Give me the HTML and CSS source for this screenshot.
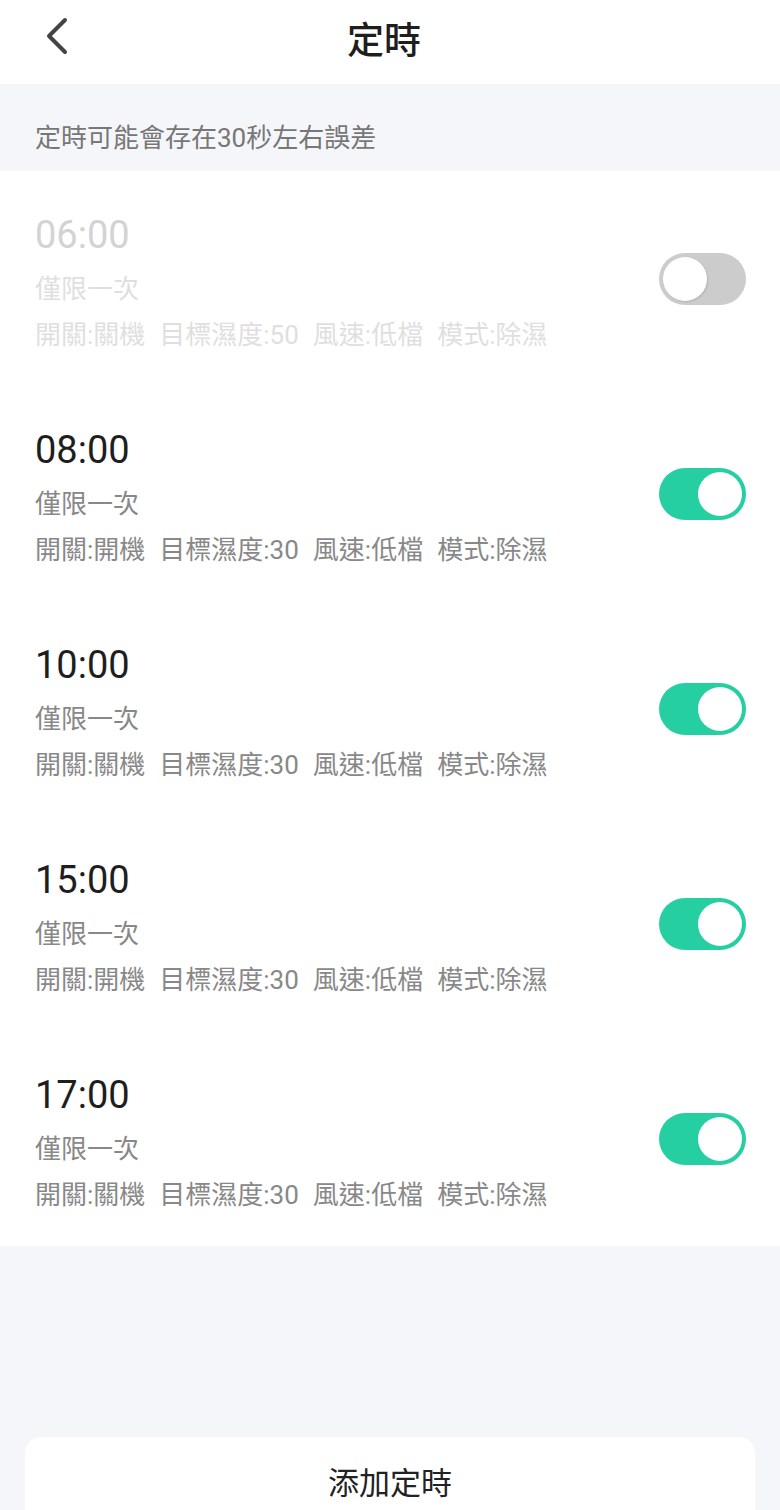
FILE: index.html
```html
<!DOCTYPE html>
<html lang="zh-Hant">
<head>
<meta charset="utf-8">
<title>定時</title>
<link rel="stylesheet" href="styles.css">
</head>
<body>
<div class="page">
  <header class="topbar">
    <span class="back">
      <svg width="30" height="40" viewBox="0 0 30 40"><polyline points="21,3 5,19 21,35" fill="none" stroke="#444" stroke-width="4" stroke-linecap="round" stroke-linejoin="round"/></svg>
    </span>
    <h1 class="title">定時</h1>
  </header>
  <div class="notice">定時可能會存在30秒左右誤差</div>
  <ul class="list">
    <li class="item disabled">
      <div class="info">
        <div class="time">06:00</div>
        <div class="repeat">僅限一次</div>
        <div class="detail"><span>開關:關機</span><span>目標濕度:50</span><span>風速:低檔</span><span>模式:除濕</span></div>
      </div>
      <span class="switch off"><span class="knob"></span></span>
    </li>
    <li class="item">
      <div class="info">
        <div class="time">08:00</div>
        <div class="repeat">僅限一次</div>
        <div class="detail"><span>開關:開機</span><span>目標濕度:30</span><span>風速:低檔</span><span>模式:除濕</span></div>
      </div>
      <span class="switch on"><span class="knob"></span></span>
    </li>
    <li class="item">
      <div class="info">
        <div class="time">10:00</div>
        <div class="repeat">僅限一次</div>
        <div class="detail"><span>開關:關機</span><span>目標濕度:30</span><span>風速:低檔</span><span>模式:除濕</span></div>
      </div>
      <span class="switch on"><span class="knob"></span></span>
    </li>
    <li class="item">
      <div class="info">
        <div class="time">15:00</div>
        <div class="repeat">僅限一次</div>
        <div class="detail"><span>開關:開機</span><span>目標濕度:30</span><span>風速:低檔</span><span>模式:除濕</span></div>
      </div>
      <span class="switch on"><span class="knob"></span></span>
    </li>
    <li class="item">
      <div class="info">
        <div class="time">17:00</div>
        <div class="repeat">僅限一次</div>
        <div class="detail"><span>開關:關機</span><span>目標濕度:30</span><span>風速:低檔</span><span>模式:除濕</span></div>
      </div>
      <span class="switch on"><span class="knob"></span></span>
    </li>
  </ul>
  <div class="actions">
    <button class="add-btn" type="button">添加定時</button>
  </div>
</div>
</body>
</html>
```

FILE: styles.css
```css
* { box-sizing: border-box; }
html, body {
  margin: 0;
  padding: 0;
  background: #f5f6fa;
}
body {
  font-family: Roboto, "Noto Sans CJK TC", sans-serif;
  color: #222;
}
.page {
  width: 780px;
  height: 1510px;
  overflow: hidden;
  display: flex;
  flex-direction: column;
}
.page > * { flex: none; }
.topbar {
  height: 84px;
  background: #fff;
  display: flex;
  align-items: center;
  justify-content: center;
  position: relative;
}
.back {
  position: absolute;
  left: 44px;
  top: 17px;
  width: 30px;
  height: 40px;
  display: flex;
}
.title {
  margin: -8px 12px 0 0;
  font-family: "Noto Sans CJK TC", sans-serif;
  font-size: 37px;
  font-weight: 500;
  line-height: 44px;
  color: #1e1e1e;
}
.notice {
  height: 87px;
  padding: 36px 0 0 35px;
  font-size: 26px;
  line-height: 36px;
  color: #777;
}
.list {
  list-style: none;
  margin: 0;
  padding: 0;
  background: #fff;
}
.item {
  height: 215px;
  padding: 42px 34px 0 35px;
  display: flex;
  align-items: flex-start;
  justify-content: space-between;
}
.info {
  display: flex;
  flex-direction: column;
}
.time {
  font-size: 38px;
  line-height: 44px;
  color: #1e1e1e;
}
.repeat {
  margin-top: 12px;
  font-family: "Noto Sans CJK TC", sans-serif;
  font-size: 26px;
  line-height: 36px;
  color: #888;
}
.detail {
  margin-top: 12px;
  font-size: 26px;
  line-height: 36px;
  color: #888;
  display: flex;
  gap: 14px;
  white-space: nowrap;
}
.disabled .time { color: #d3d3d3; }
.disabled .repeat,
.disabled .detail { color: #dfdfdf; }
.switch {
  width: 87px;
  height: 52px;
  border-radius: 26px;
  padding: 4px;
  display: flex;
  margin-top: 40px;
  flex: none;
}
.switch.on {
  background: #25cfa1;
  justify-content: flex-end;
}
.switch.off {
  background: #cccccc;
  justify-content: flex-start;
}
.knob {
  width: 44px;
  height: 44px;
  border-radius: 50%;
  background: #fff;
}
.switch.off .knob {
  box-shadow: 1px 1px 2px rgba(0,0,0,0.12);
}
.actions {
  padding: 191px 25px 0 25px;
}
.add-btn {
  width: 730px;
  height: 92px;
  border: none;
  border-radius: 16px;
  background: #fff;
  font-family: "Noto Sans CJK TC", sans-serif;
  font-size: 31px;
  color: #222;
  padding: 0 0 4px 0;
  line-height: 44px;
}
```
